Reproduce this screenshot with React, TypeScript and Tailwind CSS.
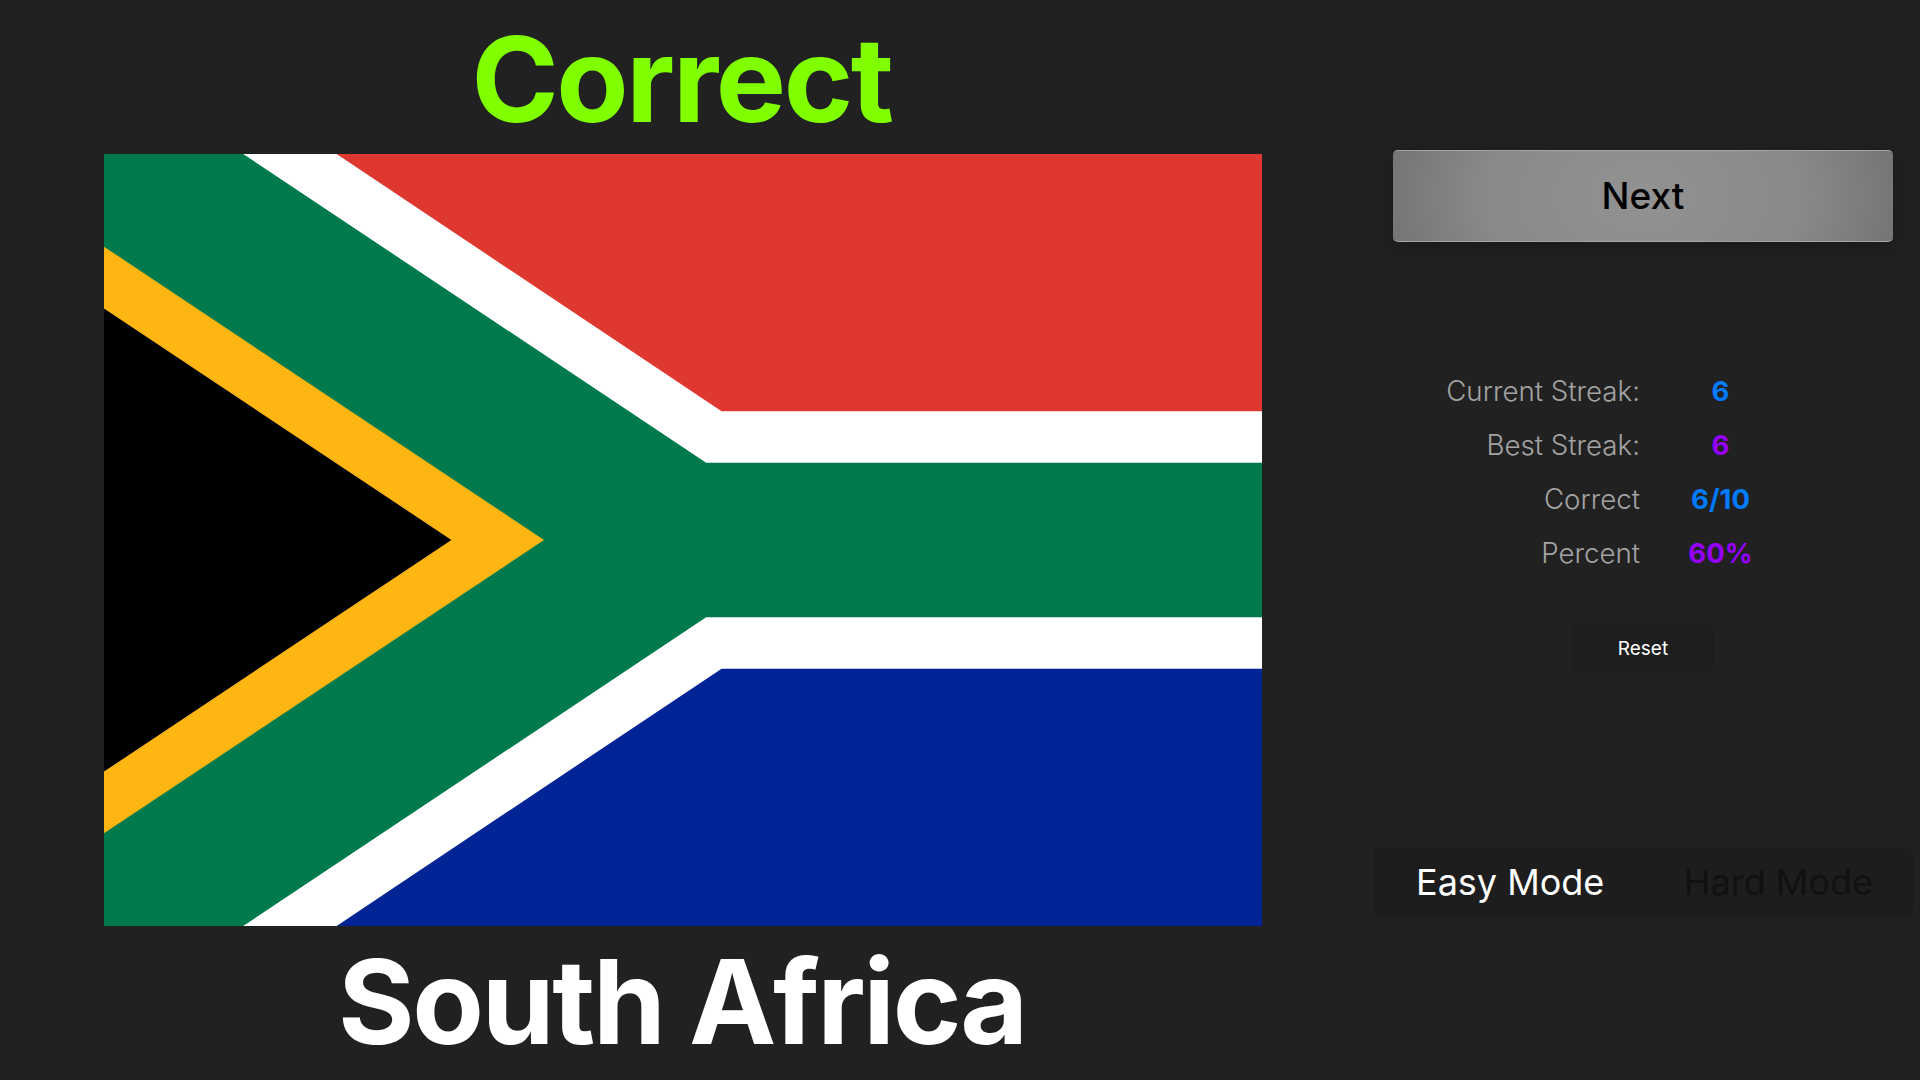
const stats = [
  { label: 'Current Streak:', value: '6', color: 'text-[#007aff]' },
  { label: 'Best Streak:', value: '6', color: 'text-[#9500ff]' },
  { label: 'Correct', value: '6/10', color: 'text-[#007aff]' },
  { label: 'Percent', value: '60%', color: 'text-[#9500ff]' },
];

function Flag() {
  return (
    <svg viewBox="0 0 90 60" className="block h-[772px] w-[1158px]">
      <rect width="90" height="30" fill="#de3831" />
      <rect y="30" width="90" height="30" fill="#002395" />
      <path d="M0 0 H18.08 L48 20 H90 V40 H48 L18.08 60 H0 Z" fill="#ffffff" />
      <path d="M0 0 H10.82 L46.8 24 H90 V36 H46.8 L10.82 60 H0 Z" fill="#007a4d" />
      <path d="M0 7.2 L34.2 30 L0 52.8 Z" fill="#ffb612" />
      <path d="M0 12 L27 30 L0 48 Z" fill="#000000" />
    </svg>
  );
}

export default function App() {
  return (
    <div className="flex h-[1080px] w-[1920px] overflow-hidden bg-[#212121] font-['Inter',sans-serif]">
      <div className="flex w-[1366px] flex-col items-center">
        <h1 className="flex h-[154px] items-center pt-[4px] pr-[3px] text-[118px] font-bold leading-none tracking-[-0.02em] text-[#7fff00]">
          Correct
        </h1>
        <Flag />
        <h2 className="flex h-[154px] items-center pb-[4px] pr-[2px] text-[117px] font-bold leading-none tracking-[-0.02em] text-white">
          South Africa
        </h2>
      </div>

      <div className="flex flex-1 flex-col items-center pt-[150px]">
        <button className="flex h-[92px] w-[500px] items-center justify-center rounded-[5px] border-t border-b border-[#a6a6a6] bg-[radial-gradient(ellipse_58%_220%_at_center,#929292_0%,#898989_55%,#6e6e6e_100%)] text-[37px] font-medium text-black shadow-[0_6px_24px_rgba(0,0,0,0.25)]">
          Next
        </button>

        <div className="mt-[122px] ml-[63px] flex flex-col self-start">
          {stats.map((s) => (
            <div key={s.label} className="flex h-[54px] items-center">
              <span className="w-[211px] whitespace-nowrap pt-[2px] text-right text-[27.7px] font-light text-[#a3a3a3]">{s.label}</span>
              <span className={`w-[161px] pt-[1px] text-center text-[27.5px] font-bold ${s.color}`}>{s.value}</span>
            </div>
          ))}
        </div>

        <button className="mt-[44px] flex h-[48px] w-[142px] items-center justify-center rounded-[6px] bg-[#1e1e1e] pt-[2px] text-[19px] text-white">
          Reset
        </button>

        <div className="mt-[175px] flex h-[70px] w-[540px] items-center justify-between rounded-[8px] bg-[#1d1d1d] pl-[43px] pr-[40px] text-[36px] font-normal">
          <span className="text-white">Easy Mode</span>
          <span className="text-[#111111]">Hard Mode</span>
        </div>
      </div>
    </div>
  );
}
